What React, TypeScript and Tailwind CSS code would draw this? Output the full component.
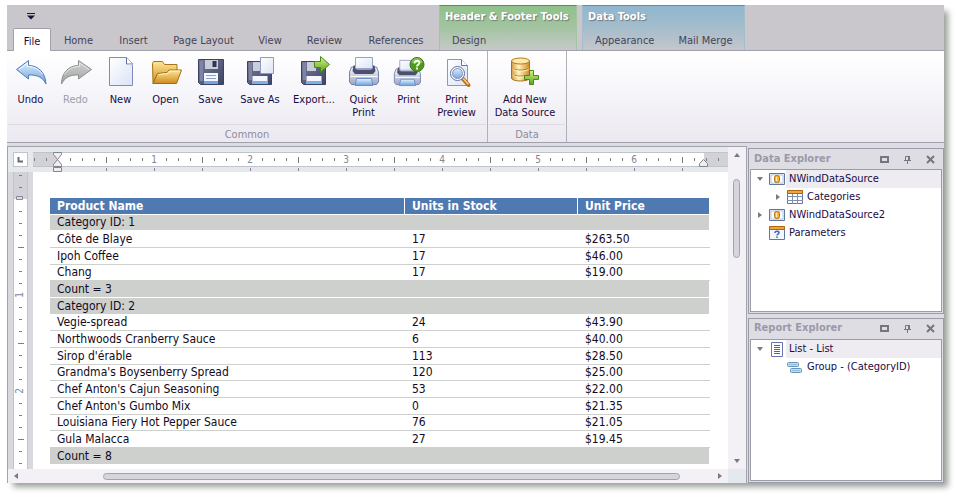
import { useState } from "react";
import type { ReactNode } from "react";

type RibbonItem = { label: string; icon: ReactNode; width: string; disabled?: boolean };

type TableRow =
  | { kind: "group"; text: string }
  | { kind: "item"; name: string; stock: number; price: string };

const rows: TableRow[] = [
  { kind: "group", text: "Category ID: 1" },
  { kind: "item", name: "Côte de Blaye", stock: 17, price: "$263.50" },
  { kind: "item", name: "Ipoh Coffee", stock: 17, price: "$46.00" },
  { kind: "item", name: "Chang", stock: 17, price: "$19.00" },
  { kind: "group", text: "Count = 3" },
  { kind: "group", text: "Category ID: 2" },
  { kind: "item", name: "Vegie-spread", stock: 24, price: "$43.90" },
  { kind: "item", name: "Northwoods Cranberry Sauce", stock: 6, price: "$40.00" },
  { kind: "item", name: "Sirop d'érable", stock: 113, price: "$28.50" },
  { kind: "item", name: "Grandma's Boysenberry Spread", stock: 120, price: "$25.00" },
  { kind: "item", name: "Chef Anton's Cajun Seasoning", stock: 53, price: "$22.00" },
  { kind: "item", name: "Chef Anton's Gumbo Mix", stock: 0, price: "$21.35" },
  { kind: "item", name: "Louisiana Fiery Hot Pepper Sauce", stock: 76, price: "$21.05" },
  { kind: "item", name: "Gula Malacca", stock: 27, price: "$19.45" },
  { kind: "group", text: "Count = 8" },
];

const tabs = [
  { label: "Home", width: "w-[55px]" },
  { label: "Insert", width: "w-[55px]" },
  { label: "Page Layout", width: "w-[85px]" },
  { label: "View", width: "w-[48px]" },
  { label: "Review", width: "w-[61px]" },
  { label: "References", width: "w-[82px]" },
];

// shared gradients for every icon on the page
function IconDefs() {
  return (
    <svg width="0" height="0" className="absolute" aria-hidden="true">
      <defs>
        <linearGradient id="blue" x1="0" y1="0" x2="0" y2="1">
          <stop offset="0" stopColor="#e3f4ff" />
          <stop offset="1" stopColor="#6f9edb" />
        </linearGradient>
        <linearGradient id="grey" x1="0" y1="0" x2="0" y2="1">
          <stop offset="0" stopColor="#d2d4d3" />
          <stop offset="1" stopColor="#9fa1a0" />
        </linearGradient>
        <linearGradient id="paper" x1="0" y1="0" x2="1" y2="1">
          <stop offset="0" stopColor="#ffffff" />
          <stop offset="1" stopColor="#dbe3f5" />
        </linearGradient>
        <linearGradient id="gold" x1="0" y1="0" x2="0" y2="1">
          <stop offset="0" stopColor="#ffe796" />
          <stop offset="1" stopColor="#cf8a1f" />
        </linearGradient>
        <linearGradient id="drum" x1="0" y1="0" x2="1" y2="0">
          <stop offset="0" stopColor="#d99a3c" />
          <stop offset="0.4" stopColor="#fff3bd" />
          <stop offset="1" stopColor="#d08a2c" />
        </linearGradient>
        <linearGradient id="navy" x1="0" y1="0" x2="1" y2="1">
          <stop offset="0" stopColor="#777d9a" />
          <stop offset="1" stopColor="#3d4362" />
        </linearGradient>
        <linearGradient id="green" x1="0" y1="0" x2="0" y2="1">
          <stop offset="0" stopColor="#d5f08a" />
          <stop offset="1" stopColor="#5ba51c" />
        </linearGradient>
        <linearGradient id="shell" x1="0" y1="0" x2="0" y2="1">
          <stop offset="0" stopColor="#f7f8fc" />
          <stop offset="1" stopColor="#9ca5c4" />
        </linearGradient>
      </defs>
    </svg>
  );
}

function Icon32({ children }: { children: ReactNode }) {
  return (
    <svg width="32" height="32" viewBox="0 0 32 32" className="shrink-0" aria-hidden="true">
      {children}
    </svg>
  );
}

function Floppy() {
  return (
    <>
      <path d="M3.500 3.500h25v25h-23l-2-2z" fill="url(#navy)" stroke="#3c4263" />
      <path d="M5 5h3v20H5z" fill="#7d84a6" />
      <path d="M10 4h13v9H10z" fill="#c9cdd9" />
      <path d="M17.500 5h4v6h-4z" fill="#2f3552" />
      <path d="M9 17h14v11H9z" fill="#f4f7fd" />
      <path d="M9 25h14v3H9z" fill="#6fa5e6" />
      <path d="M11 19.500h10M11 22.500h10" stroke="#8ea0c8" />
    </>
  );
}

function SmallFloppy() {
  return (
    <>
      <path d="M3.500 5.500h24v23h-22l-2-2z" fill="url(#navy)" stroke="#3c4263" />
      <path d="M5 7h3v17H5z" fill="#7d84a6" />
      <path d="M9 6h9v9H9z" fill="#c9cdd9" />
      <path d="M8.500 20h15v8h-15z" fill="#f4f7fd" />
      <path d="M8.500 25h15v3h-15z" fill="#7db0ea" />
    </>
  );
}

function Printer() {
  return (
    <>
      <path d="M1.500 16l2-5h25l2 5v10l-2 2.500h-25l-2-2.500z" fill="url(#shell)" stroke="#7782a8" />
      <path d="M5.500 9.500h3v4h15v-4h3l1 5.500-2.500 3h-18l-2.500-3z" fill="#4a506e" />
      <path d="M7.500 1.500h17v11h-17z" fill="url(#paper)" stroke="#98a2c6" />
      <path d="M2.500 20.500h27" stroke="#ffffff" />
      <path d="M8.500 22.500h15l1.500 7H7z" fill="url(#blue)" stroke="#6c8fc8" />
    </>
  );
}

const icons = {
  undo: (
    <Icon32>
      <path
        d="M1.500 13.500L13.500 4.500v5c9.500 0 17 7 17.500 18.500-3-6-8-9.500-17.500-9v4z"
        fill="url(#blue)"
        stroke="#4f7cb8"
        strokeLinejoin="round"
      />
      <path d="M4 13.500l8.500-6.500v3.500c7 0 12 3 15 8" fill="none" stroke="#f4fbff" />
    </Icon32>
  ),
  redo: (
    <Icon32>
      <path
        d="M31.500 13.500L18.500 4.500v5C9 9.500 1.500 16.500 1.500 28c3-6 8-9.500 17-9v4z"
        fill="url(#grey)"
        stroke="#8d8f8e"
        strokeLinejoin="round"
      />
      <path d="M29 13.500L19.500 7v3.500c-7 0-12 3-15 8" fill="none" stroke="#e6e8e7" />
    </Icon32>
  ),
  blank: (
    <Icon32>
      <path d="M4.500 1.500h17l6 6v22h-23z" fill="url(#paper)" stroke="#7f8cbb" />
      <path d="M21.500 1.500v6.500h6" fill="#ffffff" stroke="#6472a8" />
      <path d="M21.500 8h6v2z" fill="#c3cce6" />
    </Icon32>
  ),
  open: (
    <Icon32>
      <path d="M2.500 7.500l1-2h9l2 3h12.500v6L9 18 3 27.500z" fill="url(#gold)" stroke="#a8741f" strokeLinejoin="round" />
      <path d="M7.500 17.500l9.500-1 2-2.500h12.500l-5 13.500H3z" fill="url(#gold)" stroke="#a36a14" strokeLinejoin="round" />
      <path d="M8.500 18.500l9-1 2-2.500h10.500" fill="none" stroke="#fff3bf" />
    </Icon32>
  ),
  save: (
    <Icon32>
      <Floppy />
    </Icon32>
  ),
  saveAs: (
    <Icon32>
      <SmallFloppy />
      <path d="M16.500 1.500h13v16h-13z" fill="url(#paper)" stroke="#8a9ac8" />
    </Icon32>
  ),
  exportTo: (
    <Icon32>
      <SmallFloppy />
      <path d="M16.500 5.500h6v-5l9 8-9 8v-5h-6z" fill="url(#green)" stroke="#4a8a14" strokeLinejoin="round" />
    </Icon32>
  ),
  quickPrint: (
    <Icon32>
      <Printer />
    </Icon32>
  ),
  print: (
    <Icon32>
      <g transform="translate(0 3) scale(0.9)">
        <Printer />
      </g>
      <circle cx="24" cy="8.500" r="7" fill="#4f9a1e" stroke="#3a7a12" />
      <path d="M18.500 7a5.500 5 0 0 1 11 0" fill="#a8d970" opacity="0.6" />
      <path d="M21.500 7.500c0-3.500 5-3.500 5-.8 0 1.800-2.500 1.800-2.500 3.800M24 11.500v2" fill="none" stroke="#ffffff" strokeWidth="1.800" />
    </Icon32>
  ),
  preview: (
    <Icon32>
      <path d="M6.500 3.500h14l6 6v20h-20z" fill="url(#paper)" stroke="#8a97c4" />
      <path d="M20.500 3.500v6h6" fill="#ffffff" stroke="#6472a8" />
      <path d="M21.500 22.500l6 6.500" stroke="#b06a1c" strokeWidth="4" strokeLinecap="round" />
      <path d="M22.500 23l4.500 5" stroke="#ffcf80" strokeWidth="1.500" strokeLinecap="round" />
      <circle cx="16.500" cy="17.500" r="6" fill="url(#blue)" stroke="#ffffff" strokeWidth="2" />
      <circle cx="16.500" cy="17.500" r="7" fill="none" stroke="#5e6e9c" />
      <circle cx="16.500" cy="17.500" r="5" fill="none" stroke="#7f93c2" />
    </Icon32>
  ),
  addSource: (
    <Icon32>
      <path d="M2.500 5v17c0 4 18 4 18 0V5z" fill="url(#drum)" stroke="#a8701c" />
      <ellipse cx="11.500" cy="5" rx="9" ry="3" fill="#ffe9a6" stroke="#b27c22" />
      <path d="M2.500 11.500c0 3.500 18 3.500 18 0M2.500 17.500c0 3.500 18 3.500 18 0" fill="none" stroke="#a8701c" />
      <path d="M3.500 12.500c1 3.500 16 3.500 16.500 0M3.500 18.500c1 3.500 16 3.500 16.500 0" fill="none" stroke="#fff6cc" />
      <path d="M20.500 14.500h4v5h5v4h-5v5h-4v-5h-5v-4h5z" fill="url(#green)" stroke="#4a8a14" />
    </Icon32>
  ),
};

const commonItems: RibbonItem[] = [
  { label: "Undo", icon: icons.undo, width: "w-[45px]" },
  { label: "Redo", icon: icons.redo, width: "w-[45px]", disabled: true },
  { label: "New", icon: icons.blank, width: "w-[45px]" },
  { label: "Open", icon: icons.open, width: "w-[45px]" },
  { label: "Save", icon: icons.save, width: "w-[45px]" },
  { label: "Save As", icon: icons.saveAs, width: "w-[54px]" },
  { label: "Export...", icon: icons.exportTo, width: "w-[54px]" },
  { label: "Quick Print", icon: icons.quickPrint, width: "w-[45px]" },
  { label: "Print", icon: icons.print, width: "w-[45px]" },
  { label: "Print Preview", icon: icons.preview, width: "w-[51px]" },
];

function RibbonGroup({ title, items }: { title: string; items: RibbonItem[] }) {
  return (
    <section className="flex flex-col border-r border-[#b0b0bb] px-px" aria-label={title}>
      <div className="flex pr-1">
        {items.map((item) => (
          <button
            key={item.label}
            type="button"
            disabled={item.disabled}
            className={`flex h-[73px] flex-col items-center gap-[5px] px-[3px] pt-[5px] leading-[13px] text-[#1a0b45] disabled:text-[#9d9dab] ${item.width}`}
          >
            {item.icon}
            <span>{item.label}</span>
          </button>
        ))}
      </div>
      <h2 className="border-t border-[#dcdbe2] pt-[3px] text-center leading-[14px] text-[#8c8c9b]">{title}</h2>
    </section>
  );
}

function TabStrip() {
  return (
    <div className="flex h-[46px] border-b border-[#a1a1ad] bg-[#c9c7cc] text-[#45445a]">
      <div className="flex flex-col justify-between">
        <button type="button" aria-label="Customize toolbar" className="ml-5 mt-[7px] w-2">
          <svg width="8" height="8" aria-hidden="true">
            <path d="M0 1.500h8" stroke="#1a1238" />
            <path d="M0 3.500h8l-4 4z" fill="#1a1238" />
          </svg>
        </button>
        <nav className="flex pl-[6px]" aria-label="Ribbon tabs">
          <button
            type="button"
            className="-mb-px h-[23px] w-[38px] rounded-t-xs border border-b-0 border-[#a1a1ad] bg-white pt-1 text-[#1a0b45]"
          >
            File
          </button>
          {tabs.map((tab) => (
            <button key={tab.label} type="button" className={`h-[22px] pt-1 ${tab.width}`}>
              {tab.label}
            </button>
          ))}
        </nav>
      </div>
      <div className="ml-[2px] flex w-[138px] flex-col justify-between border-x border-t border-[#a3c4a1] border-t-[#3fa33b] bg-linear-to-b from-[#8fc18b] via-[#a3c4a1] to-[#c6c9c9]">
        <h2 className="px-[5px] pt-1 font-bold leading-[14px] whitespace-nowrap text-white [text-shadow:1px_1px_1px_#6d7a70]">
          Header &amp; Footer Tools
        </h2>
        <div className="flex">
          <button type="button" className="h-[22px] px-3 pt-1">
            Design
          </button>
        </div>
      </div>
      <div className="ml-[5px] flex w-[163px] flex-col justify-between border-x border-t border-[#a5bdcb] border-t-[#4691c9] bg-linear-to-b from-[#8fb6cf] via-[#a5bdcb] to-[#c5c6cb]">
        <h2 className="px-[5px] pt-1 font-bold leading-[14px] whitespace-nowrap text-white [text-shadow:1px_1px_1px_#6d7680]">
          Data Tools
        </h2>
        <div className="flex whitespace-nowrap">
          <button type="button" className="h-[22px] px-3 pt-1">
            Appearance
          </button>
          <button type="button" className="h-[22px] px-3 pt-1">
            Mail Merge
          </button>
        </div>
      </div>
    </div>
  );
}

const INCH = 96;
const eighths = Array.from({ length: 58 }, (_, i) => i - 2);

function HorizontalRuler() {
  return (
    <svg className="h-5 w-full" height="20" aria-hidden="true">
      <rect width="100%" height="15" fill="#c3c2c9" />
      <rect y="1" width="100%" height="13" fill="#d3d1d8" />
      <rect x="24" y="1" width="647" height="13" fill="#ffffff" />
      {eighths.map((n) => {
        const x = 25 + n * 12;
        if (n === 0) return null;
        if (n % 8 === 0)
          return (
            <text key={n} x={x} y="11" textAnchor="middle" fontSize="10" fill="#85858f">
              {n / 8}
            </text>
          );
        const half = n % 4 === 0;
        return <rect key={n} x={x} y={half ? 5 : 6} width="1" height={half ? 6 : 3} fill="#7d7d87" />;
      })}
      {Array.from({ length: 13 }, (_, i) => (
        <rect key={i} x={73 + (i * INCH) / 2} y="16" width="1" height="3" fill="#85858f" />
      ))}
      <path d="M20.500.500h8v2l-4 5 4 5v2h-8v-2l4-5-4-5z" fill="#eeeef1" stroke="#85858f" />
      <path d="M20.500 15.500h8v4h-8z" fill="#eeeef1" stroke="#85858f" />
      <path d="M666.500 14.500v-3l4-4 4 4v3z" fill="#eeeef1" stroke="#85858f" />
    </svg>
  );
}

function VerticalRuler() {
  return (
    <svg width="25" className="shrink-0" aria-hidden="true">
      <rect width="25" height="100%" fill="#dad8df" />
      <rect x="5" width="15" height="100%" fill="#c3c2c9" />
      <rect x="6" width="13" height="100%" fill="#ffffff" />
      <rect x="6" width="13" height="27" fill="#d3d1d8" />
      <path d="M8.500 24.500h6v3h-6z" fill="#dedce6" stroke="#85859c" />
      {Array.from({ length: 25 }, (_, i) => i - 2).map((n) => {
        const y = 27 + n * 12;
        if (n === 0) return null;
        if (n % 8 === 0)
          return (
            <text
              key={n}
              transform={`translate(15 ${y}) rotate(-90)`}
              textAnchor="middle"
              fontSize="10"
              fill="#85858f"
            >
              {n / 8}
            </text>
          );
        const half = n % 4 === 0;
        return <rect key={n} x={half ? 10 : 11} y={y} width={half ? 6 : 3} height="1" fill="#7d7d87" />;
      })}
    </svg>
  );
}

function Arrow({ dir }: { dir: "up" | "down" | "left" | "right" }) {
  const paths = {
    up: "M1 6h6l-3-4z",
    down: "M1 2h6l-3 4z",
    left: "M6 1v6l-4-3z",
    right: "M2 1v6l4-3z",
  };
  return (
    <svg width="8" height="8" className="shrink-0" aria-hidden="true">
      <path d={paths[dir]} fill="#7a7a84" />
    </svg>
  );
}

function ReportTable() {
  return (
    <table className="w-full table-fixed border-separate border-spacing-0 text-left text-[12px] leading-[15px] text-[#120a20]">
      <colgroup>
        <col />
        <col className="w-[173px]" />
        <col className="w-[132px]" />
      </colgroup>
      <thead>
        <tr className="h-[17px] text-white [&>th]:border-r [&>th]:border-b [&>th]:border-white [&>th]:bg-[#4f79b1] [&>th]:px-[7px] [&>th]:py-0">
          <th scope="col">Product Name</th>
          <th scope="col">Units in Stock</th>
          <th scope="col">Unit Price</th>
        </tr>
      </thead>
      <tbody>
        {rows.map((row, i) =>
          row.kind === "group" ? (
            <tr key={i} className="h-[17px] nth-[3n+1]:h-4">
              <td colSpan={3} className="border-r border-b border-white bg-[#ced0ce] px-[7px] py-0">
                {row.text}
              </td>
            </tr>
          ) : (
            <tr
              key={i}
              className="h-[17px] nth-[3n+1]:h-4 [&>td]:border-b [&>td]:border-[#ced0ce] [&>td]:px-[7px] [&>td]:py-0"
            >
              <td>{row.name}</td>
              <td>{row.stock}</td>
              <td>{row.price}</td>
            </tr>
          ),
        )}
      </tbody>
    </table>
  );
}

function DocumentView() {
  return (
    <main className="flex min-w-0 flex-1 flex-col border-x border-t border-[#a3a3ae] bg-[#e3e9ec]">
      <div className="flex">
        <div className="min-w-0 flex-1">
          <div className="flex pt-[5px]">
            <button
              type="button"
              aria-label="Tab alignment"
              className="mr-[5px] ml-[5px] flex h-[15px] w-[15px] shrink-0 items-center justify-center border border-[#c3c2c9] bg-white"
            >
              <svg width="7" height="7" aria-hidden="true">
                <path d="M1.500 1v4.500H6" fill="none" stroke="#6b6b78" strokeWidth="2" />
              </svg>
            </button>
            <HorizontalRuler />
          </div>
          <div className="flex">
            <VerticalRuler />
            <div className="min-w-0 flex-1 bg-white pt-[26px] pr-[18px] pb-1 pl-[17px]">
              <ReportTable />
            </div>
          </div>
        </div>
        <div className="flex w-[18px] flex-col items-center bg-[#f3f1f6] pr-px">
          <button type="button" aria-label="Scroll up" className="py-1">
            <Arrow dir="up" />
          </button>
          <div className="mt-4 h-[79px] w-[7px] rounded-full border border-[#a3a3ae] bg-[#d7d5dc]" />
          <button type="button" aria-label="Scroll down" className="mt-auto py-1">
            <Arrow dir="down" />
          </button>
        </div>
      </div>
      <div className="flex h-[14px]">
        <div className="flex flex-1 items-center justify-between bg-[#f3f1f6] px-1">
          <button type="button" aria-label="Scroll left">
            <Arrow dir="left" />
          </button>
          <div className="mr-9 ml-[83px] h-[7px] flex-1 rounded-full border border-[#a3a3ae] bg-[#d7d5dc]" />
          <button type="button" aria-label="Scroll right">
            <Arrow dir="right" />
          </button>
        </div>
        <div className="w-[18px]" />
      </div>
    </main>
  );
}

function SourceIcon() {
  return (
    <svg width="16" height="16" className="shrink-0" aria-hidden="true">
      <path d="M.5 2.500h15v11H.5z" fill="#e9eefa" stroke="#5f78a0" />
      <path d="M2 4h12v8H2z" fill="#ffffff" stroke="#b9c7e2" />
      <rect x="5.500" y="4.500" width="5" height="7" rx="2" fill="#f6b53c" stroke="#b86e10" />
      <path d="M7.500 6v4" stroke="#fff0b5" />
    </svg>
  );
}

function TableIcon() {
  return (
    <svg width="16" height="16" className="shrink-0" aria-hidden="true">
      <path d="M.5 4.500h15v10H.5z" fill="#ffffff" stroke="#5f78a0" />
      <path d="M0 7.500h16M0 11.500h16M5.500 5v10M10.500 5v10" stroke="#7d90b3" />
      <path d="M.5 1.500h15v3H.5z" fill="#f0a43c" stroke="#b0650f" />
    </svg>
  );
}

function ParametersIcon() {
  return (
    <svg width="16" height="16" className="shrink-0" aria-hidden="true">
      <path d="M.5 4.500h15v10H.5z" fill="#f3f6fd" stroke="#5f78a0" />
      <path d="M.5 1.500h15v3H.5z" fill="#f0a43c" stroke="#b0650f" />
      <path d="M6 8c0-2.500 4-2 4-.3 0 1.500-2 1.300-2 2.800M8 11.500v1.500" fill="none" stroke="#3c68c0" strokeWidth="1.500" />
    </svg>
  );
}

function ReportIcon() {
  return (
    <svg width="16" height="16" className="shrink-0" aria-hidden="true">
      <path d="M2.500 1.500h11v14h-11z" fill="#ffffff" stroke="#6a76b4" />
      <path d="M5 4.500h6M5 6.500h6M5 8.500h6M5 10.500h6M5 12.500h6" stroke="#54609c" />
    </svg>
  );
}

function GroupIcon() {
  return (
    <svg width="16" height="16" className="shrink-0" aria-hidden="true">
      <rect x=".5" y="3.500" width="11" height="4" rx="1" fill="#b9dcf5" stroke="#6d93b8" />
      <rect x="3.500" y="9.500" width="11" height="4" rx="1" fill="#b9dcf5" stroke="#6d93b8" />
      <path d="M2 5.500h8M5 11.500h8" stroke="#8ec1e6" />
    </svg>
  );
}

type Node = { label: string; icon: ReactNode; arrow?: "down" | "right"; child?: boolean };

const dataNodes: Node[] = [
  { label: "NWindDataSource", icon: <SourceIcon />, arrow: "down" },
  { label: "Categories", icon: <TableIcon />, arrow: "right", child: true },
  { label: "NWindDataSource2", icon: <SourceIcon />, arrow: "right" },
  { label: "Parameters", icon: <ParametersIcon /> },
];

const reportNodes: Node[] = [
  { label: "List - List", icon: <ReportIcon />, arrow: "down" },
  { label: "Group - (CategoryID)", icon: <GroupIcon />, child: true },
];

function ExplorerPanel({ title, nodes }: { title: string; nodes: Node[] }) {
  const [selected, setSelected] = useState(nodes[0].label);

  return (
    <section className="flex flex-1 flex-col border border-[#9c9ca8] bg-[#dfdde4] px-px pb-px">
      <header className="flex h-5 items-center pr-[7px] pl-1 text-[#9a99a9]">
        <h2 className="mr-auto font-bold">{title}</h2>
        <div className="flex gap-[14px]">
          <button type="button" aria-label={`Maximize ${title}`}>
            <svg width="9" height="9" aria-hidden="true">
              <path d="M1 2h7v5H1z" fill="none" stroke="#77767f" strokeWidth="2" />
            </svg>
          </button>
          <button type="button" aria-label={`Pin ${title}`}>
            <svg width="9" height="9" aria-hidden="true">
              <path d="M2.500 5V1.500h4V5M1 5.500h7M4.500 6v3" fill="none" stroke="#77767f" />
              <path d="M5 1h2v4H5z" fill="#77767f" />
            </svg>
          </button>
          <button type="button" aria-label={`Close ${title}`}>
            <svg width="9" height="9" aria-hidden="true">
              <path d="M1 1l7 7M8 1L1 8" stroke="#77767f" strokeWidth="2" />
            </svg>
          </button>
        </div>
      </header>
      <ul className="flex-1 border border-[#9c9ca8] bg-white">
        {nodes.map((node) => (
          <li key={node.label}>
            <button
              type="button"
              onClick={() => setSelected(node.label)}
              className={`flex h-[18px] w-full items-center text-left text-[#1a0b45] ${node.child ? "pl-[23px]" : "pl-[5px]"}`}
            >
              <span className="mr-[5px] w-2">{node.arrow && <Arrow dir={node.arrow} />}</span>
              {node.icon}
              <span
                className={`ml-px flex-1 pl-[3px] leading-[18px] ${node.label === selected ? "bg-[#eeecf1]" : ""}`}
              >
                {node.label}
              </span>
            </button>
          </li>
        ))}
      </ul>
    </section>
  );
}

export default function App() {
  return (
    <div className="bg-white pt-[5px] pr-[13px] pb-[15px] pl-[7px] font-['DejaVu_Sans_Condensed','DejaVu_Sans',sans-serif] text-[11px]">
      <IconDefs />
      <div className="shadow-[5px_5px_6px_-1px_#9aa09a]">
        <TabStrip />
        <div className="flex border-b border-[#a1a1ad] bg-linear-to-b from-white via-[#f5f4f9] to-[#ebe9ef]">
          <RibbonGroup title="Common" items={commonItems} />
          <RibbonGroup
            title="Data"
            items={[{ label: "Add New Data Source", icon: icons.addSource, width: "w-[72px]" }]}
          />
        </div>
        <div className="flex bg-[#dddbe3] pt-[3px]">
          <DocumentView />
          <aside className="flex w-[197px] flex-col gap-1 pt-[2px] pl-px">
            <ExplorerPanel title="Data Explorer" nodes={dataNodes} />
            <ExplorerPanel title="Report Explorer" nodes={reportNodes} />
          </aside>
        </div>
      </div>
    </div>
  );
}
